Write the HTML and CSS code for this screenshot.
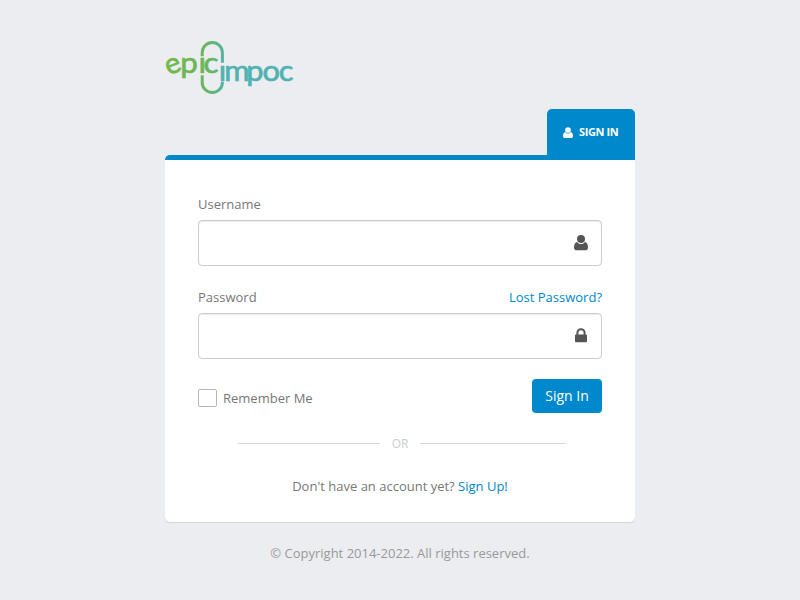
FILE: index.html
```html
<!DOCTYPE html>
<html lang="en">
<head>
<meta charset="utf-8">
<title>Sign In</title>
<link rel="stylesheet" href="styles.css">
</head>
<body>
<main class="sign">
  <header class="top">
    <svg class="logo" width="134" height="60" viewBox="0 0 134 60" role="img" aria-label="epic impoc">
      <defs>
        <linearGradient id="brand" gradientUnits="userSpaceOnUse" x1="1" y1="0" x2="62" y2="0">
          <stop offset="0" stop-color="#73b84b"/>
          <stop offset=".65" stop-color="#69b560"/>
          <stop offset="1" stop-color="#50b3ad"/>
        </linearGradient>
      </defs>
      <g fill="none" stroke="url(#brand)" stroke-width="3">
        <path d="M37.2 19.3v-3.7a10.1 10.1 0 0 1 20.2 0v10.2"/>
        <path d="M37.2 38.3v7.1a10.1 10.1 0 0 0 20.2 0v-.7"/>
      </g>
      <g class="word" fill="url(#brand)" stroke="url(#brand)">
        <text transform="rotate(-22 8 29)" x="0.6" y="36.3">e</text>
        <text transform="scale(1.08 1)" x="14.2 31 35.7" y="36.3">pıc</text>
      </g>
      <g class="word" fill="#50b3b1" stroke="#50b3b1"><text transform="scale(1.06 1)" x="50.7 55.8 76.6 92 107.4" y="44">ımpoc</text></g>
    </svg>
    <div class="tab">
      <svg width="10" height="11" viewBox="0 0 14 15"><use href="#user"/></svg>
      <span>SIGN IN</span>
    </div>
  </header>
  <form class="panel">
    <div class="label-row"><label for="u">Username</label></div>
    <div class="field">
      <input id="u" type="text">
      <svg width="14" height="16" viewBox="0 0 14 16"><g id="user"><circle cx="7" cy="4" r="4"/><path d="M3.1 6.9C1 7.3 0 9.4 0 12.4 0 14 1 15.3 2.6 15.3h8.8c1.6 0 2.6-1.3 2.6-2.9 0-3-1-5.1-3.1-5.5C9.7 8.5 8.4 9 7 9s-2.7-.5-3.9-2.1z"/></g></svg>
    </div>
    <div class="label-row second"><label for="p">Password</label><a>Lost Password?</a></div>
    <div class="field">
      <input id="p" type="password">
      <svg width="14" height="16" viewBox="0 0 14 16"><path fill-rule="evenodd" d="M1 7.5q0-1 1-1h.4V4.8a4.6 4.6 0 0 1 9.2 0v1.7H12q1 0 1 1v5.8q0 1-1 1H2q-1 0-1-1zM4.4 6.5h5.2V4.8a2.6 2.6 0 0 0-5.2 0z"/></svg>
    </div>
    <div class="actions">
      <label class="remember"><input type="checkbox">Remember Me</label>
      <button type="button">Sign In</button>
    </div>
    <div class="or"><i class="left"></i><span>OR</span><i class="right"></i></div>
    <p class="signup">Don't have an account yet? <a>Sign Up!</a></p>
  </form>
  <p class="copyright">© Copyright 2014-2022. All rights reserved.</p>
</main>
</body>
</html>
```
FILE: styles.css
```css
* { box-sizing: border-box; }
body {
  margin: 0;
  background: #ecedf0;
  color: #777;
  font: 13px/22px "Open Sans", sans-serif;
}
p { margin: 0; }
a { color: #0088cc; }
svg { display: block; }
.sign { width: 470px; margin: 0 auto; padding-top: 37px; }
.top { display: flex; justify-content: space-between; height: 118px; }
.logo { overflow: visible; }
.word { font: 29px Lato, sans-serif; stroke-width: .7px; }
.tab {
  align-self: flex-end;
  display: flex;
  align-items: center;
  gap: 6px;
  width: 88px;
  height: 46px;
  padding: 0 16px;
  border-radius: 5px 5px 0 0;
  background: #0088cc;
  color: #fff;
  fill: #fff;
  font-size: 11px;
  font-weight: 700;
  letter-spacing: -.4px;
  white-space: nowrap;
}
.panel {
  height: 367px;
  padding: 33px 33px 0;
  border-top: 5px solid #0088cc;
  border-radius: 5px 0 5px 5px;
  background: #fff;
  box-shadow: 0 1px 1px rgba(0, 0, 0, .1);
}
.label-row { display: flex; justify-content: space-between; height: 27px; }
.second { margin-top: 20px; }
.field {
  display: flex;
  align-items: center;
  height: 46px;
  padding-right: 13px;
  border: 1px solid #ccc;
  border-radius: 4px;
  box-shadow: inset 0 1px 1px rgba(0, 0, 0, .075);
  fill: #555;
}
.field input { flex: 1; height: 100%; border: 0; background: none; outline: none; }
.actions { display: flex; justify-content: space-between; margin-top: 20px; }
.remember { display: flex; align-items: center; gap: 6px; height: 38px; }
.remember input {
  appearance: none;
  width: 19px;
  height: 18px;
  margin: 0;
  border: 1px solid #b5b5b5;
  border-radius: 2px;
}
button {
  width: 70px;
  height: 34px;
  padding: 0;
  border: 0;
  border-radius: 4px;
  background: #0088cc;
  color: #fff;
  font: 14px/34px "Open Sans", sans-serif;
}
.or {
  display: flex;
  align-items: center;
  height: 20px;
  margin-top: 16px;
  padding-left: 40px;
  color: #ccc;
  font-size: 12px;
}
.or i { height: 1px; background: #d8d8d8; }
.or span { width: 40px; padding-top: 1px; text-align: center; }
.left { width: 142px; }
.right { width: 146px; }
.signup { margin-top: 22px; text-align: center; }
.copyright { margin-top: 20px; color: #999; text-align: center; }
```
